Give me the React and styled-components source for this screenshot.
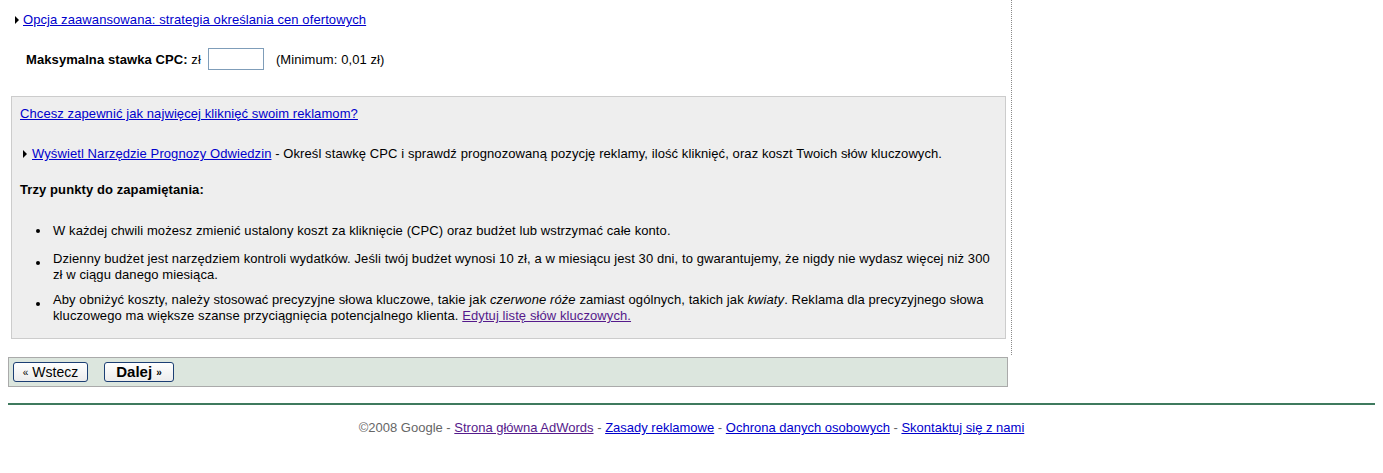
import styled, { createGlobalStyle, css } from "styled-components";

const GlobalStyle = createGlobalStyle`
  body {
    margin: 0 8px 8px 8px;
    background: #fff;
    font-family: "Liberation Sans", Arial, sans-serif;
    font-size: 13px;
    letter-spacing: 0.09px;
    color: #000;
  }
  a {
    color: #0000cc;
  }
`;

const MainColumn = styled.div`
  width: 1004px;
  box-sizing: border-box;
  border-right: 1px dotted #8a8a8a;
  padding-top: 12px;
  padding-bottom: 16px;
`;

const AdvancedLine = styled.div`
  display: flex;
  align-items: center;
  gap: 3px;
  padding-left: 7px;
  line-height: 16px;
`;

const Triangle = styled.span`
  display: inline-block;
  flex-shrink: 0;
  width: 0;
  height: 0;
  border-top: 4px solid transparent;
  border-bottom: 4px solid transparent;
  border-left: 4px solid #000;
  margin-right: 1px;
`;

const CpcRow = styled.div`
  display: flex;
  align-items: center;
  margin-top: 20px;
  padding-left: 18px;
  height: 22px;
`;

const CpcLabel = styled.span`
  font-weight: bold;
`;

const CpcInput = styled.input`
  width: 56px;
  height: 22px;
  box-sizing: border-box;
  border: 1px solid #7f9db9;
  margin: 0 12px 0 7px;
  font-family: inherit;
  font-size: 13px;
`;

const InfoBox = styled.div`
  margin: 26px 0 0 3px;
  width: 995px;
  box-sizing: border-box;
  background: #eeeeee;
  border: 1px solid #cccccc;
  padding: 9px 8px 14px 8px;
  line-height: 16px;
`;

const Para = styled.div`
  margin-top: ${(p) => p.$top || 0}px;
  display: flex;
  align-items: center;
  ${(p) =>
    p.$bold &&
    css`
      font-weight: bold;
    `}
`;

const ToolLine = styled(Para)`
  padding-left: 3px;
  gap: 4px;
`;

const Bullets = styled.ul`
  list-style: none;
  margin: 25px 0 0 0;
  padding: 0 0 0 33px;
`;

const Bullet = styled.li`
  position: relative;
  margin-top: ${(p) => p.$top || 0}px;

  &::before {
    content: "";
    position: absolute;
    left: -17px;
    top: ${(p) => (p.$low ? 10 : 6)}px;
    width: 4px;
    height: 4px;
    border-radius: 50%;
    background: #000;
  }
`;

const Visited = styled.a`
  color: #551a8b;
`;

const ButtonBar = styled.div`
  width: 1000px;
  box-sizing: border-box;
  margin-top: 2px;
  background: #dce6de;
  border: 1px solid #aaaaaa;
  padding: 4px 4px;
  display: flex;
  align-items: center;
  gap: 16px;
`;

const NavButton = styled.button`
  height: 20px;
  box-sizing: border-box;
  border: 1px solid #1c3f74;
  border-radius: 3px;
  background: linear-gradient(#ffffff, #ececec);
  font-family: "Liberation Sans", Arial, sans-serif;
  color: #000;
  white-space: nowrap;
  padding: 0;
  font-size: ${(p) => (p.$primary ? 15 : 14)}px;
  font-weight: ${(p) => (p.$primary ? "bold" : "normal")};
  line-height: 18px;
  width: ${(p) => (p.$primary ? 70 : 75)}px;
`;

const Guillemet = styled.span`
  font-size: 10px;
  vertical-align: 1px;
`;

const Rule = styled.hr`
  margin: 16px 0 0 0;
  border: 0;
  height: 2px;
  background: #3f7a5e;
`;

const Footer = styled.div`
  text-align: center;
  margin-top: 15px;
  color: #666666;
  line-height: 16px;
  letter-spacing: 0;
`;

export default function App() {
  return (
    <>
      <GlobalStyle />
      <MainColumn>
        <AdvancedLine>
          <Triangle />
          <a href="#">Opcja zaawansowana: strategia określania cen ofertowych</a>
        </AdvancedLine>
        <CpcRow>
          <CpcLabel>Maksymalna stawka CPC:</CpcLabel>&nbsp;zł
          <CpcInput type="text" />
          (Minimum: 0,01 zł)
        </CpcRow>
        <InfoBox>
          <Para>
            <a href="#">Chcesz zapewnić jak najwięcej kliknięć swoim reklamom?</a>
          </Para>
          <ToolLine $top={24}>
            <Triangle />
            <span>
              <a href="#">Wyświetl Narzędzie Prognozy Odwiedzin</a> - Określ
              stawkę CPC i sprawdź prognozowaną pozycję reklamy, ilość kliknięć,
              oraz koszt Twoich słów kluczowych.
            </span>
          </ToolLine>
          <Para $top={20} $bold>
            Trzy punkty do zapamiętania:
          </Para>
          <Bullets>
            <Bullet>
              W każdej chwili możesz zmienić ustalony koszt za kliknięcie (CPC)
              oraz budżet lub wstrzymać całe konto.
            </Bullet>
            <Bullet $top={12} $low>
              Dzienny budżet jest narzędziem kontroli wydatków. Jeśli twój budżet
              wynosi 10 zł, a w miesiącu jest 30 dni, to gwarantujemy, że nigdy nie
              wydasz więcej niż 300 zł w ciągu danego miesiąca.
            </Bullet>
            <Bullet $top={9} $low>
              Aby obniżyć koszty, należy stosować precyzyjne słowa kluczowe, takie
              jak <i>czerwone róże</i> zamiast ogólnych, takich jak <i>kwiaty</i>.
              Reklama dla precyzyjnego słowa kluczowego ma większe szanse
              przyciągnięcia potencjalnego klienta.{" "}
              <Visited href="#">Edytuj listę słów kluczowych.</Visited>
            </Bullet>
          </Bullets>
        </InfoBox>
      </MainColumn>
      <ButtonBar>
        <NavButton>
          <Guillemet>«</Guillemet> Wstecz
        </NavButton>
        <NavButton $primary>
          Dalej <Guillemet>»</Guillemet>
        </NavButton>
      </ButtonBar>
      <Rule />
      <Footer>
        ©2008 Google - <Visited href="#">Strona główna AdWords</Visited> -{" "}
        <a href="#">Zasady reklamowe</a> -{" "}
        <a href="#">Ochrona danych osobowych</a> -{" "}
        <a href="#">Skontaktuj się z nami</a>
      </Footer>
    </>
  );
}
